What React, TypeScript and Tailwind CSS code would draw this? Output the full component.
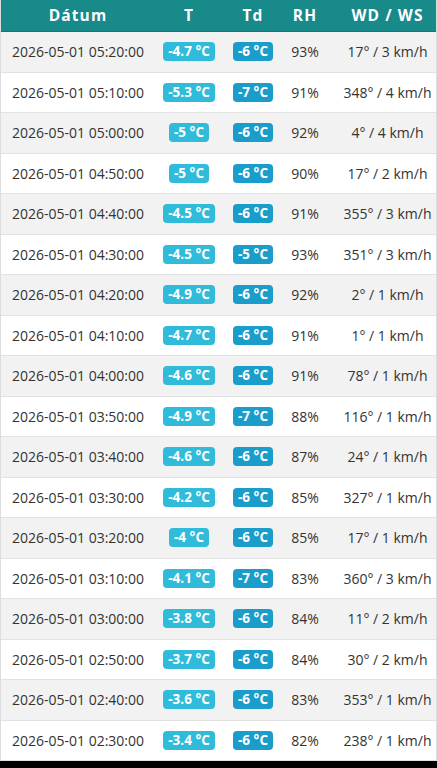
import React from "react";

const rows: [string, string, string, string, string][] = [
  ["05:20:00", "-4.7", "-6", "93%", "17° / 3 km/h"],
  ["05:10:00", "-5.3", "-7", "91%", "348° / 4 km/h"],
  ["05:00:00", "-5", "-6", "92%", "4° / 4 km/h"],
  ["04:50:00", "-5", "-6", "90%", "17° / 2 km/h"],
  ["04:40:00", "-4.5", "-6", "91%", "355° / 3 km/h"],
  ["04:30:00", "-4.5", "-5", "93%", "351° / 3 km/h"],
  ["04:20:00", "-4.9", "-6", "92%", "2° / 1 km/h"],
  ["04:10:00", "-4.7", "-6", "91%", "1° / 1 km/h"],
  ["04:00:00", "-4.6", "-6", "91%", "78° / 1 km/h"],
  ["03:50:00", "-4.9", "-7", "88%", "116° / 1 km/h"],
  ["03:40:00", "-4.6", "-6", "87%", "24° / 1 km/h"],
  ["03:30:00", "-4.2", "-6", "85%", "327° / 1 km/h"],
  ["03:20:00", "-4", "-6", "85%", "17° / 1 km/h"],
  ["03:10:00", "-4.1", "-7", "83%", "360° / 3 km/h"],
  ["03:00:00", "-3.8", "-6", "84%", "11° / 2 km/h"],
  ["02:50:00", "-3.7", "-6", "84%", "30° / 2 km/h"],
  ["02:40:00", "-3.6", "-6", "83%", "353° / 1 km/h"],
  ["02:30:00", "-3.4", "-6", "82%", "238° / 1 km/h"],
];

const grid = "grid grid-cols-[154px_68px_60px_44px_1fr] items-center";

export default function App() {
  return (
    <div className="min-h-[768px] w-[437px] bg-black" style={{ fontFamily: '"Open Sans", sans-serif' }}>
      <div className="border-x border-[#dddddd] bg-white">
        <div className={`${grid} h-[32px] bg-[#188a8a] border-b border-[#137575] text-white font-bold text-[15.5px] tracking-[0.07em]`}>
          <div className="text-center">Dátum</div>
          <div className="text-center">T</div>
          <div className="text-center">Td</div>
          <div className="text-center">RH</div>
          <div className="text-center pl-3">WD / WS</div>
        </div>
        {rows.map((r, i) => (
          <div
            key={i}
            className={`${grid} h-[40.5px] border-b border-[#e2e2e2] text-[14px] text-[#333333] ${i % 2 === 0 ? "bg-[#f2f2f2]" : "bg-white"}`}
          >
            <div className="text-center">2026-05-01 {r[0]}</div>
            <div className="flex justify-center">
              <span className="rounded-[4px] bg-[#2fbbd9] px-[5px] text-[13.5px] font-bold leading-[19px] text-white">
                {r[1]} °C
              </span>
            </div>
            <div className="flex justify-center">
              <span className="rounded-[4px] bg-[#1a9dca] px-[5px] text-[13.5px] font-bold leading-[19px] text-white">
                {r[2]} °C
              </span>
            </div>
            <div className="text-center">{r[3]}</div>
            <div className="text-center pl-3">{r[4]}</div>
          </div>
        ))}
      </div>
    </div>
  );
}
